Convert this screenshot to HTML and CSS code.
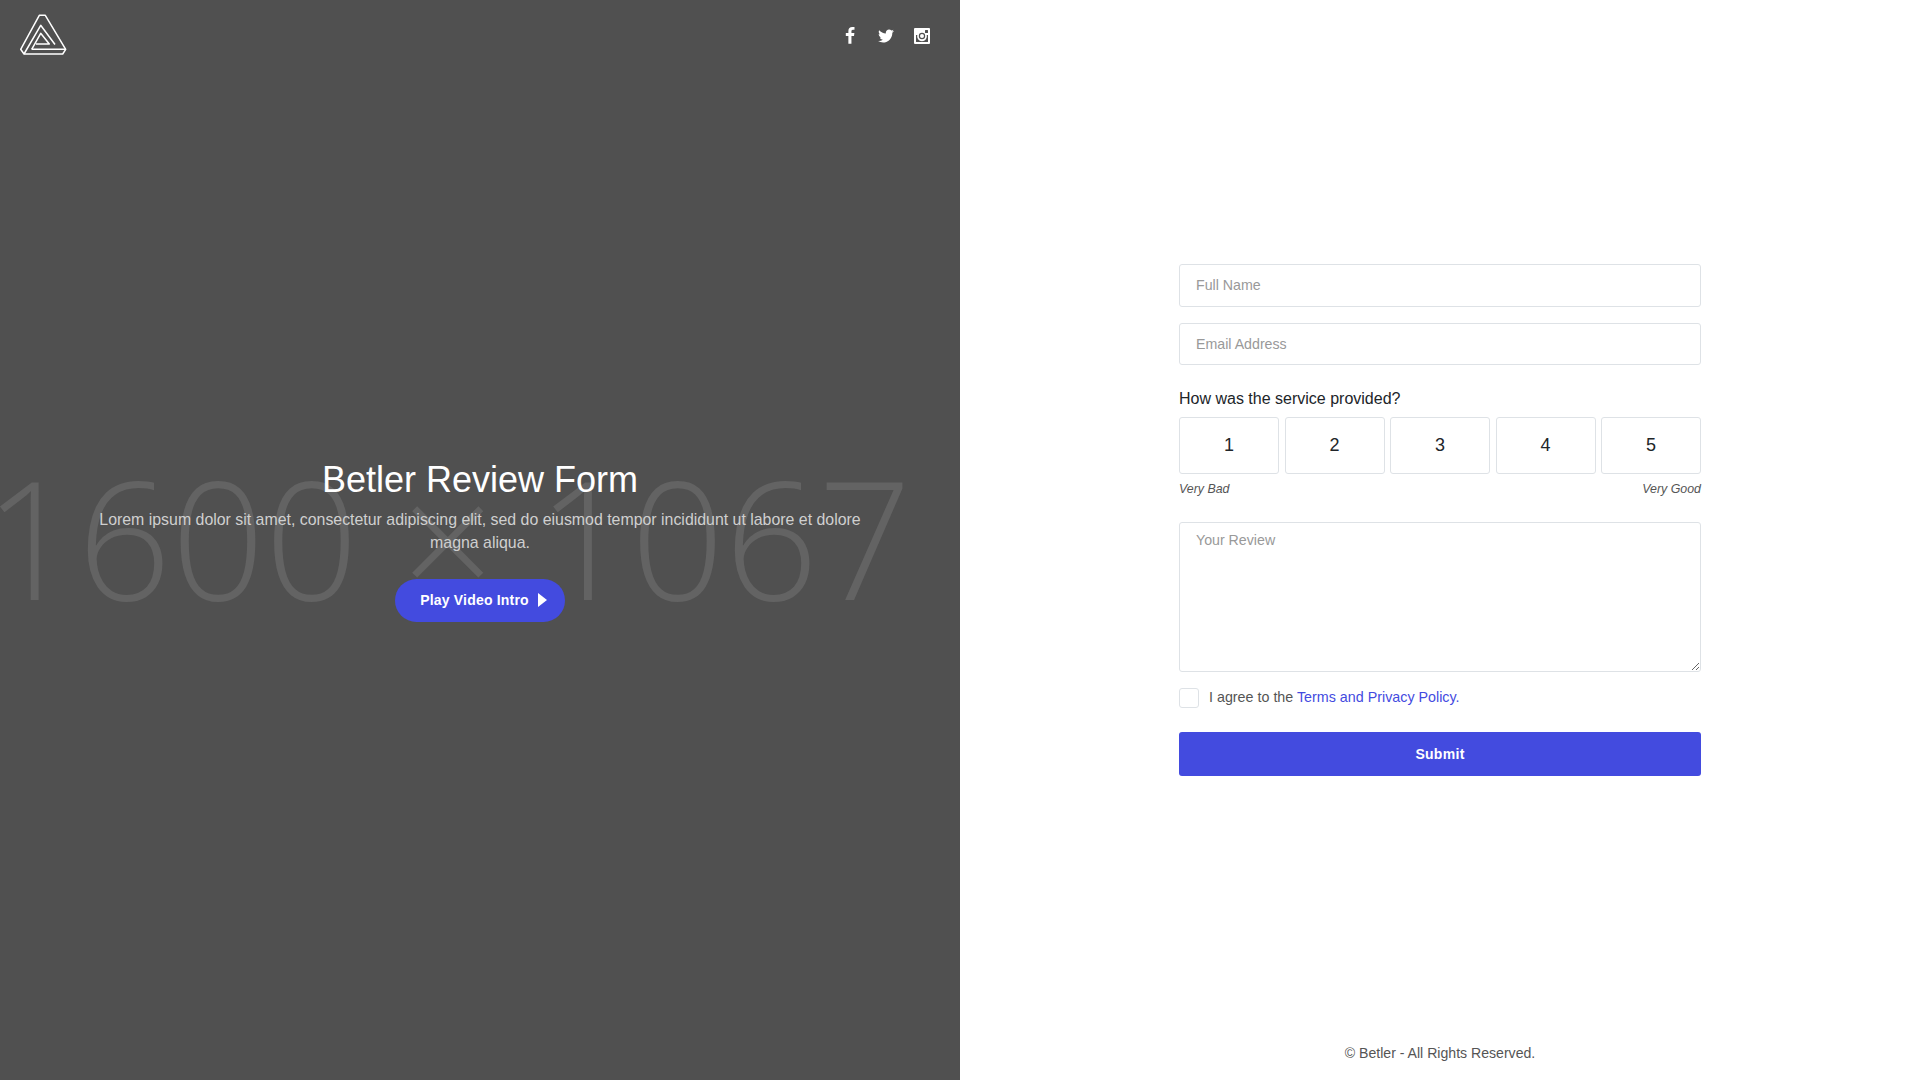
FILE: index.html
```html
<!DOCTYPE html>
<html lang="en">
<head>
<meta charset="utf-8">
<title>Betler Review Form</title>
<link rel="stylesheet" href="styles.css">
</head>
<body>
<main class="split">
  <section class="hero">
    <div class="watermark" aria-hidden="true">1600 × 1067</div>
    <header class="hero-top">
      <svg class="logo" viewBox="0 0 70 60" fill="none" stroke="#fff" stroke-width="1.500" stroke-linejoin="round">
        <path d="M39.300 15.300H45.300L65.700 49.300L62.700 54H24L20.700 49.300Z"/>
        <path d="M24 54L40.700 25.300L55 44.500"/>
        <path d="M31.700 49.300H65.700"/>
        <path d="M31.700 49.300L40.700 33.300L49.300 44H36"/>
      </svg>
      <nav class="social">
        <a href="#"><svg class="ico" viewBox="0 0 1792 1792"><path d="M1343 12v264h-157q-86 0-116 36t-30 108v189h293l-39 296h-254v759h-306v-759h-255v-296h255v-218q0-186 104-288.500t277-102.500q147 0 228 12z"/></svg></a>
        <a href="#"><svg class="ico" viewBox="0 0 1792 1792"><path d="M1684 408q-67 98-162 167 1 14 1 42 0 130-38 259.500t-115.500 248.500-184.500 210.500-258 146-323 54.500q-271 0-496-145 35 4 78 4 225 0 401-138-105-2-188-64.500t-114-159.500q33 5 61 5 43 0 85-11-112-23-185.500-111.500t-73.500-205.500v-4q68 38 146 41-66-44-105-115t-39-154q0-88 44-163 121 149 294.500 238.500t371.500 99.500q-8-38-8-74 0-134 94.500-228.500t228.500-94.500q140 0 236 102 109-21 205-78-37 115-142 178 91-10 182-50z"/></svg></a>
        <a href="#"><svg class="ico" viewBox="-1 -1 18 18"><path fill-rule="evenodd" d="M1 0H15A1 1 0 0 1 16 1V15A1 1 0 0 1 15 16H1A1 1 0 0 1 0 15V1A1 1 0 0 1 1 0ZM11.500 2A.5.500 0 0 0 11 2.500V4.500A.5.500 0 0 0 11.500 5H13.500A.5.500 0 0 0 14 4.500V2.500A.5.500 0 0 0 13.500 2ZM8 4.800A3.200 3.200 0 1 0 8 11.200A3.200 3.200 0 1 0 8 4.800ZM8 6A2 2 0 1 1 8 10A2 2 0 1 1 8 6ZM2 7V13.500A.5.500 0 0 0 2.500 14H13.500A.5.500 0 0 0 14 13.500V7H12.700A4.900 4.900 0 1 1 3.300 7Z"/></svg></a>
      </nav>
    </header>
    <div class="hero-body">
      <h1>Betler Review Form</h1>
      <p>Lorem ipsum dolor sit amet, consectetur adipiscing elit, sed do eiusmod tempor incididunt ut labore et dolore magna aliqua.</p>
      <a class="play" href="#">Play Video Intro<span class="tri"></span></a>
    </div>
  </section>
  <section class="side">
    <div class="side-body">
      <form class="form">
        <input class="field field-first" type="text" placeholder="Full Name">
        <input class="field" type="email" placeholder="Email Address">
        <div class="rating">
          <div class="rating-label">How was the service provided?</div>
          <div class="rating-row">
            <button type="button" class="rate">1</button>
            <button type="button" class="rate">2</button>
            <button type="button" class="rate">3</button>
            <button type="button" class="rate">4</button>
            <button type="button" class="rate">5</button>
          </div>
          <div class="rating-ends"><em>Very Bad</em><em>Very Good</em></div>
        </div>
        <textarea class="field area" placeholder="Your Review"></textarea>
        <label class="agree"><span class="box"></span><span class="agree-text">I agree to the <a href="#">Terms and Privacy Policy.</a></span></label>
        <button type="button" class="submit">Submit</button>
      </form>
    </div>
    <footer class="copy">© Betler - All Rights Reserved.</footer>
  </section>
</main>
</body>
</html>
```
FILE: styles.css
```css
* { box-sizing: border-box; }
html, body { margin: 0; height: 100%; }
body { font-family: "Liberation Sans", Arial, sans-serif; color: #212529; background: #fff; overflow: hidden; }
.split { display: flex; height: 1080px; }

.hero { position: relative; flex: 0 0 960px; background: #505050; color: #fff; overflow: hidden; display: flex; flex-direction: column; }
.watermark { position: absolute; left: -16px; top: 425px; font: 300 164px/1.36 "Open Sans", sans-serif; color: #636363; white-space: nowrap; word-spacing: 0; }
.hero-top { position: relative; display: flex; justify-content: space-between; align-items: flex-start; height: 72px; padding: 0 29px 0 0; }
.logo { display: block; width: 70px; height: 60px; }
.social { display: flex; gap: 18px; padding-top: 27px; }
.social a { display: block; width: 18px; height: 18px; }
.ico { display: block; width: 18px; height: 18px; fill: #fff; }
.hero-body { position: relative; flex: 1; display: flex; flex-direction: column; align-items: center; padding: 386px 90px 0; text-align: center; }
h1 { margin: 0; font-size: 36px; font-weight: 400; line-height: 43px; }
.hero-body p { margin: 7px 0 0; font-size: 15.900px; line-height: 23px; color: #cfcfcf; }
.play { display: flex; align-items: center; margin-top: 25px; height: 43px; padding: 0 18px 1px 25px; border-radius: 22px; background: #434bdf; color: #fff; font-size: 14px; font-weight: 700; letter-spacing: .2px; text-decoration: none; }
.tri { width: 0; height: 0; margin-left: 9px; border-left: 9px solid #fff; border-top: 7px solid transparent; border-bottom: 7px solid transparent; }

.side { flex: 1; display: flex; flex-direction: column; align-items: center; }
.side-body { flex: 1; display: flex; align-items: flex-start; padding-top: 264px; }
.form { width: 522px; display: flex; flex-direction: column; }
.field { display: block; width: 100%; height: 43px; padding: 0 16px; border: 1px solid #dee2e6; border-radius: 3px; background: #fff; font: 14.200px "Liberation Sans", Arial, sans-serif; color: #495057; outline: 0; }
.field-first { padding-bottom: 2px; }
.field + .field { margin-top: 16px; height: 42px; }
.field::placeholder { color: #999; opacity: 1; }
.rating { margin-top: 20px; }
.rating-label { font-size: 16px; line-height: 27px; color: #212529; }
.rating-row { display: flex; gap: 5.500px; margin-top: 5px; }
.rate { flex: 1; height: 57px; padding: 0; border: 1px solid #dee2e6; border-radius: 3px; background: #fff; font: 18px "Liberation Sans", Arial, sans-serif; color: #212529; }
.rating-ends { display: flex; justify-content: space-between; margin-top: 7px; font-size: 12.400px; line-height: 16px; color: #555; }
.field.area { margin-top: 25px; height: 150px; padding: 9px 16px; resize: vertical; }
.agree { display: flex; align-items: center; gap: 10px; margin-top: 16px; font-size: 14.300px; line-height: 20px; color: #555; }
.agree-text { margin-top: -2px; }
.agree a { color: #434bdf; text-decoration: none; }
.box { width: 20px; height: 20px; border: 1px solid #dee2e6; border-radius: 3px; background: #fff; }
.submit { margin-top: 24px; height: 44px; padding: 0 0 1px; border: 0; border-radius: 3px; background: #434bdf; color: #fff; font: 700 14px "Liberation Sans", Arial, sans-serif; letter-spacing: .3px; }
.copy { padding-bottom: 18px; font-size: 14.100px; line-height: 18px; color: #555; }
```
